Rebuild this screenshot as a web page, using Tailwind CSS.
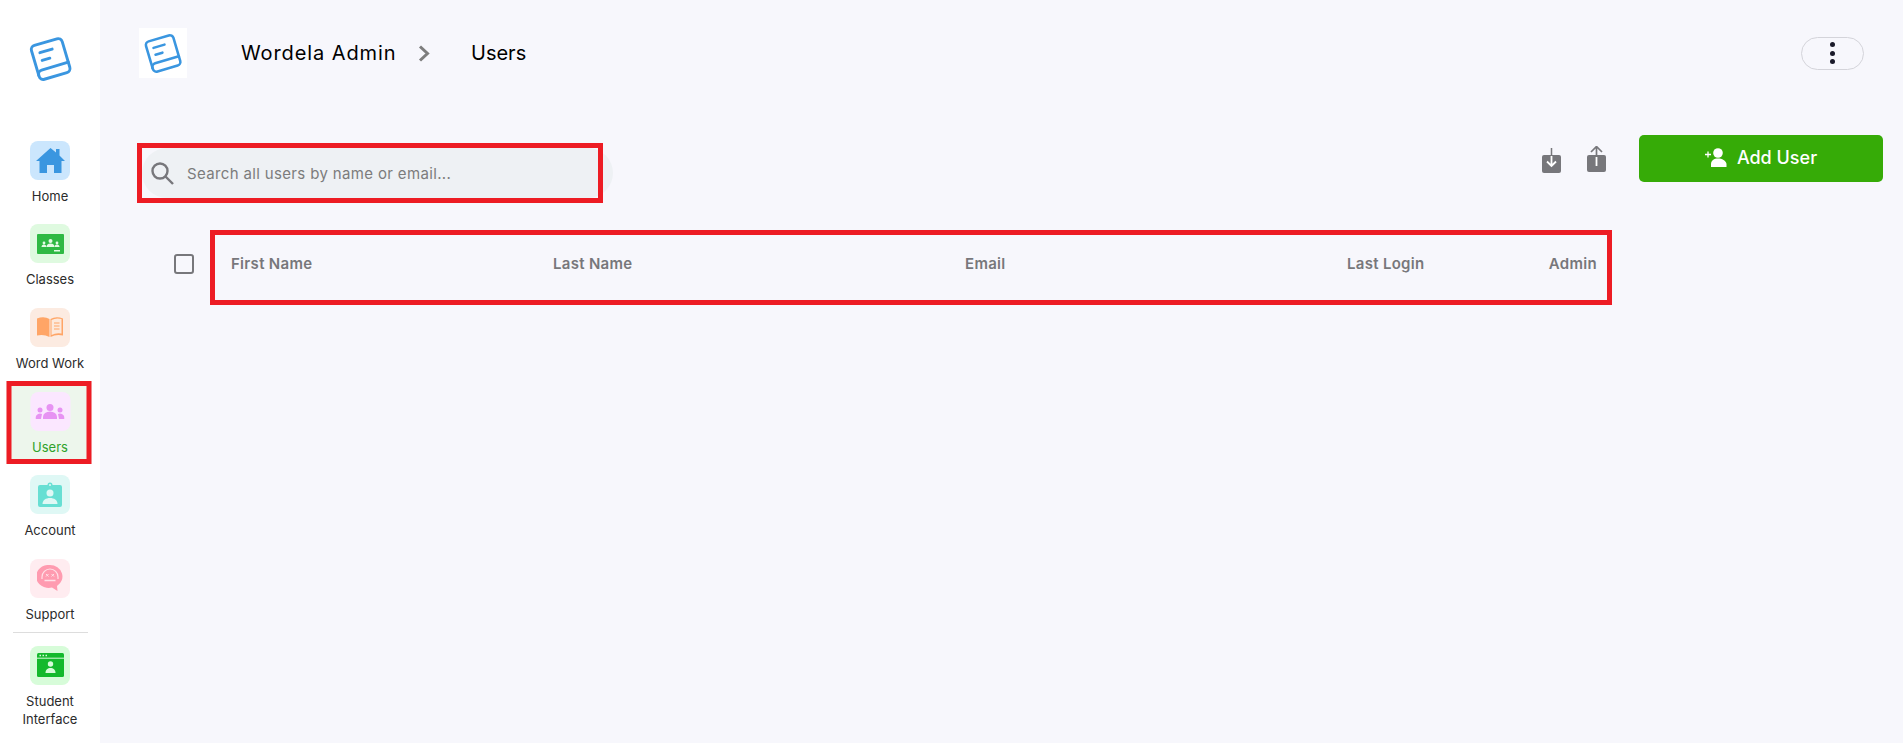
<!doctype html>
<html class="h-[743px] overflow-hidden">
<head>
<meta charset="utf-8">
<script src="https://cdn.jsdelivr.net/npm/@tailwindcss/browser@4"></script>
</head>
<body class="h-[743px] overflow-hidden bg-[#f7f7fc] font-['Inter','Liberation_Sans',sans-serif]">
<div class="flex h-[743px] w-[1903px] overflow-hidden">
  <aside class="flex w-[100px] shrink-0 flex-col items-center bg-white">
    <div class="flex h-[129.500px] w-full shrink-0 items-start justify-center pt-[35px]">
      <svg class="h-[47px] w-[45px]" viewBox="0 0 42 44" fill="none" stroke="#3a96e0" stroke-width="2.700" stroke-linecap="round" stroke-linejoin="round"><g transform="rotate(-16.500 21 22)"><rect x="6" y="6" width="30" height="33" rx="4"/><path d="M6 34a4 4 0 0 1 4-4h26"/><path d="M13 14h12M13 21.500h7.500"/></g></svg>
    </div>
    <a class="flex h-[83.700px] w-full shrink-0 flex-col items-center pt-[11px]">
      <span class="flex h-[39px] w-[40px] items-center justify-center rounded-lg bg-[#cbe6fd]">
        <svg class="h-[26px] w-[29px]" viewBox="0 0 29 26" fill="#3a96e0"><path d="M14.500 1 20 5.500V2h3.500v6.500L29 14h-3.500v12H18v-8h-7v8H3.500V14H0Z"/></svg>
      </span>
      <span class="mt-[6px] text-[13px] leading-[20px] text-[#2b2b2b]">Home</span>
    </a>
    <a class="flex h-[83.700px] w-full shrink-0 flex-col items-center pt-[11px]">
      <span class="flex h-[39px] w-[40px] items-center justify-center rounded-lg bg-[#dffae0]">
        <svg class="h-[20px] w-[27px]" viewBox="0 0 27 20"><rect width="27" height="20" rx="1" fill="#2fb944"/><g fill="#e4fae5"><circle cx="13.500" cy="7" r="2"/><path d="M9.500 13a4 3.500 0 0 1 8 0Z"/><circle cx="7" cy="9" r="1.400"/><path d="M4.500 13a2.500 2.500 0 0 1 5 0Z"/><circle cx="20" cy="9" r="1.400"/><path d="M17.500 13a2.500 2.500 0 0 1 5 0Z"/><rect x="17" y="16" width="6" height="1.500"/></g></svg>
      </span>
      <span class="mt-[6px] text-[13px] leading-[20px] text-[#2b2b2b]">Classes</span>
    </a>
    <a class="flex h-[83.700px] w-full shrink-0 flex-col items-center pt-[11px]">
      <span class="flex h-[39px] w-[40px] items-center justify-center rounded-lg bg-[#fcebe1]">
        <svg class="h-[20px] w-[26px]" viewBox="0 0 26 20"><path d="M0 1.500Q7-1 12.500 2v18Q7 17 0 18.500Z" fill="#ffa566"/><path d="M13.500 2Q19-1 26 1.500v17Q19 17 13.500 20Z" fill="#ffa566"/><path d="M14.500 3Q19 0.500 24.500 2v14.500Q19 15.500 14.500 18Z" fill="#fde9dc"/><path d="M17 6h5.500M17 9h5.500M17 12h5.500" stroke="#ffa566" stroke-width="1.200"/></svg>
      </span>
      <span class="mt-[6px] text-[13px] leading-[20px] text-[#2b2b2b]">Word Work</span>
    </a>
    <a class="flex h-[83.700px] w-[85px] shrink-0 -translate-x-[1.500px] flex-col items-center border-[5px] border-[#ed1c24] bg-[#edf6ec] pl-[3px] pt-[6px]">
      <span class="flex h-[39px] w-[40px] shrink-0 items-center justify-center rounded-lg bg-[#fbe7ff]">
        <svg class="h-[15px] w-[29px]" viewBox="0 0 29 15" fill="#e793f3"><circle cx="14.500" cy="3.500" r="3.500"/><path d="M7.500 15v-2a7 5.500 0 0 1 14 0v2Z"/><circle cx="4.500" cy="6" r="2.500"/><path d="M0 15v-1.500A4.500 4 0 0 1 6.500 10L5.500 15Z"/><circle cx="24.500" cy="6" r="2.500"/><path d="M29 15v-1.500A4.500 4 0 0 0 22.500 10L23.500 15Z"/></svg>
      </span>
      <span class="mt-[6px] text-[13px] leading-[20px] text-[#2ea12a]">Users</span>
    </a>
    <a class="flex h-[83.700px] w-full shrink-0 flex-col items-center pt-[11px]">
      <span class="flex h-[39px] w-[40px] items-center justify-center rounded-lg bg-[#dff8f5]">
        <svg class="h-[25px] w-[24px]" viewBox="0 0 24 25"><path d="M2 3h7.500a2.500 2.500 0 0 1 5 0H22a2 2 0 0 1 2 2v18a2 2 0 0 1-2 2H2a2 2 0 0 1-2-2V5a2 2 0 0 1 2-2Z" fill="#67dfd3"/><circle cx="12" cy="3" r="1" fill="#dff8f5"/><circle cx="12" cy="11" r="3.500" fill="#dff8f5"/><path d="M4.500 22c0-4 3.500-6 7.500-6s7.500 2 7.500 6Z" fill="#dff8f5"/></svg>
      </span>
      <span class="mt-[6px] text-[13px] leading-[20px] text-[#2b2b2b]">Account</span>
    </a>
    <a class="flex h-[83.700px] w-full shrink-0 flex-col items-center pt-[11px]">
      <span class="flex h-[39px] w-[40px] items-center justify-center rounded-lg bg-[#ffecf0]">
        <svg class="h-[26px] w-[26px]" viewBox="0 0 26 26"><path d="M13 0a12.500 11.500 0 0 1 7 21l.5 5-5.500-3.500A12.500 11.500 0 1 1 13 0Z" fill="#ff9bb0"/><path d="M5 14v-2a8 8 0 0 1 16 0v2" fill="none" stroke="#ffe1e8" stroke-width="1.200"/><path d="M9 9l2.500 2.500M11.500 9 9 11.500M14.500 9l2.500 2.500M17 9l-2.500 2.500" stroke="#ffe1e8" stroke-width="1"/><path d="M7.500 15.500h11" stroke="#ffe1e8" stroke-width="1.500"/></svg>
      </span>
      <span class="mt-[6px] text-[13px] leading-[20px] text-[#2b2b2b]">Support</span>
    </a>
    <div class="h-px w-[75px] shrink-0 bg-[#dddddd]"></div>
    <a class="flex w-full flex-col items-center pt-[13px]">
      <span class="flex h-[39px] w-[40px] items-center justify-center rounded-lg bg-[#d7fcd9]">
        <svg class="h-[24px] w-[27px]" viewBox="0 0 27 24"><rect width="27" height="24" rx="1.500" fill="#14b92c"/><path d="M0 5.200h27" stroke="#d7fcd9" stroke-width="1"/><path d="M2.500 2.500h1.500M5.500 2.500h1.500M8.500 2.500h1.500" stroke="#d7fcd9" stroke-width="1.400"/><circle cx="13.500" cy="11" r="2.700" fill="#d7fcd9"/><path d="M8.500 20c0-3.500 2.200-5 5-5s5 1.500 5 5Z" fill="#d7fcd9"/></svg>
      </span>
      <span class="mt-[7px] w-[80px] text-center text-[13px] leading-[18px] text-[#2b2b2b]">Student Interface</span>
    </a>
  </aside>

  <main class="min-w-0 flex-1 pl-[39px] pr-[20px] pt-[28px]">
    <header class="flex h-[50px] items-center">
      <div class="flex h-[50px] w-[48px] items-center justify-center bg-white">
        <svg class="h-[42px] w-[40px]" viewBox="0 0 42 44" fill="none" stroke="#3a96e0" stroke-width="2.700" stroke-linecap="round" stroke-linejoin="round"><g transform="rotate(-16.500 21 22)"><rect x="6" y="6" width="30" height="33" rx="4"/><path d="M6 34a4 4 0 0 1 4-4h26"/><path d="M13 14h12M13 21.500h7.500"/></g></svg>
      </div>
      <span class="ml-[54px] w-[177px] text-[20px] leading-[27px] tracking-[0.9px] text-black">Wordela Admin</span>
      <svg class="h-[17px] w-[12px]" viewBox="0 0 12 17" fill="none" stroke="#7d7d7d" stroke-width="3"><path d="M2 1.500 9.500 8.500 2 15.500"/></svg>
      <span class="ml-[41px] text-[20px] leading-[27px] text-black">Users</span>
      <button class="ml-auto mr-[19px] flex h-[33px] w-[63px] flex-col items-center justify-center gap-[3.500px] rounded-full border border-[#d4d4da]">
        <span class="size-[5px] rounded-full bg-[#1a1a2a]"></span>
        <span class="size-[5px] rounded-full bg-[#1a1a2a]"></span>
        <span class="size-[5px] rounded-full bg-[#1a1a2a]"></span>
      </button>
    </header>

    <section class="mt-[57px] flex items-start">
      <div class="relative ml-[3px] mt-[13px] flex h-[50px] w-[471px] items-center rounded-full bg-[#eef1f4] pl-[9px]">
        <svg class="h-[23px] w-[23px]" viewBox="0 0 23 23" fill="none" stroke="#77777b" stroke-width="2.400"><circle cx="9" cy="9" r="7.500"/><path d="m14.500 14.500 7.500 7.500"/></svg>
        <span class="ml-[13px] text-[15px] leading-[21px] tracking-[0.35px] text-[#7c7c7c]">Search all users by name or email...</span>
        <div class="absolute left-[-5px] top-[-5px] h-[60px] w-[466px] border-[5px] border-[#ed1c24]"></div>
      </div>
      <svg class="ml-[929px] mt-[13px] h-[25px] w-[19px]" viewBox="0 0 19 25"><rect y="7" width="19" height="18" rx="2" fill="#77777b"/><path d="M9.500 0v18" stroke="#77777b" stroke-width="1.500"/><path d="M9.500 8v10M5 13.500l4.500 4.500 4.500-4.500" stroke="#fff" stroke-width="1.800" fill="none"/></svg>
      <svg class="ml-[26px] mt-[11px] h-[26px] w-[19px]" viewBox="0 0 19 26"><rect y="9" width="19" height="17" rx="2" fill="#77777b"/><path d="M4 6l5.500-5.500L15 6M9.500 1v8" stroke="#77777b" stroke-width="1.700" fill="none"/><path d="M9.500 11v9" stroke="#fff" stroke-width="1.800"/></svg>
      <button class="ml-[33px] flex h-[47px] w-[244px] items-center justify-center rounded-[5px] bg-[#36ab07] pb-[2px]">
        <svg class="h-[19px] w-[22px]" viewBox="0 0 22 19" fill="#fff"><circle cx="13" cy="5" r="4.800"/><path d="M6 19v-3c0-3.500 3-5.500 7-5.500s8 2 8.500 5.500v3Z"/><path d="M0 6.500h6M3 3.500v6" stroke="#fff" stroke-width="1.300"/></svg>
        <span class="ml-[10px] text-[18px] font-medium leading-[24px] text-white">Add User</span>
      </button>
    </section>

    <section class="mt-[32px] flex h-[75px] items-center">
      <span class="mb-[7px] ml-[35px] block size-[20px] rounded-[3px] border-2 border-[#77777b]"></span>
      <div class="ml-[16px] flex h-[75px] w-[1402px] items-center border-[5px] border-[#ed1c24] pb-[7px] pl-[16px] pr-[10px] text-[15px] font-semibold leading-[20px] tracking-[0.3px] text-[#77777b]">
        <span class="w-[322px]">First Name</span>
        <span class="w-[412px]">Last Name</span>
        <span class="w-[382px]">Email</span>
        <span>Last Login</span>
        <span class="ml-auto">Admin</span>
      </div>
    </section>
  </main>
</div>
</body>
</html>
